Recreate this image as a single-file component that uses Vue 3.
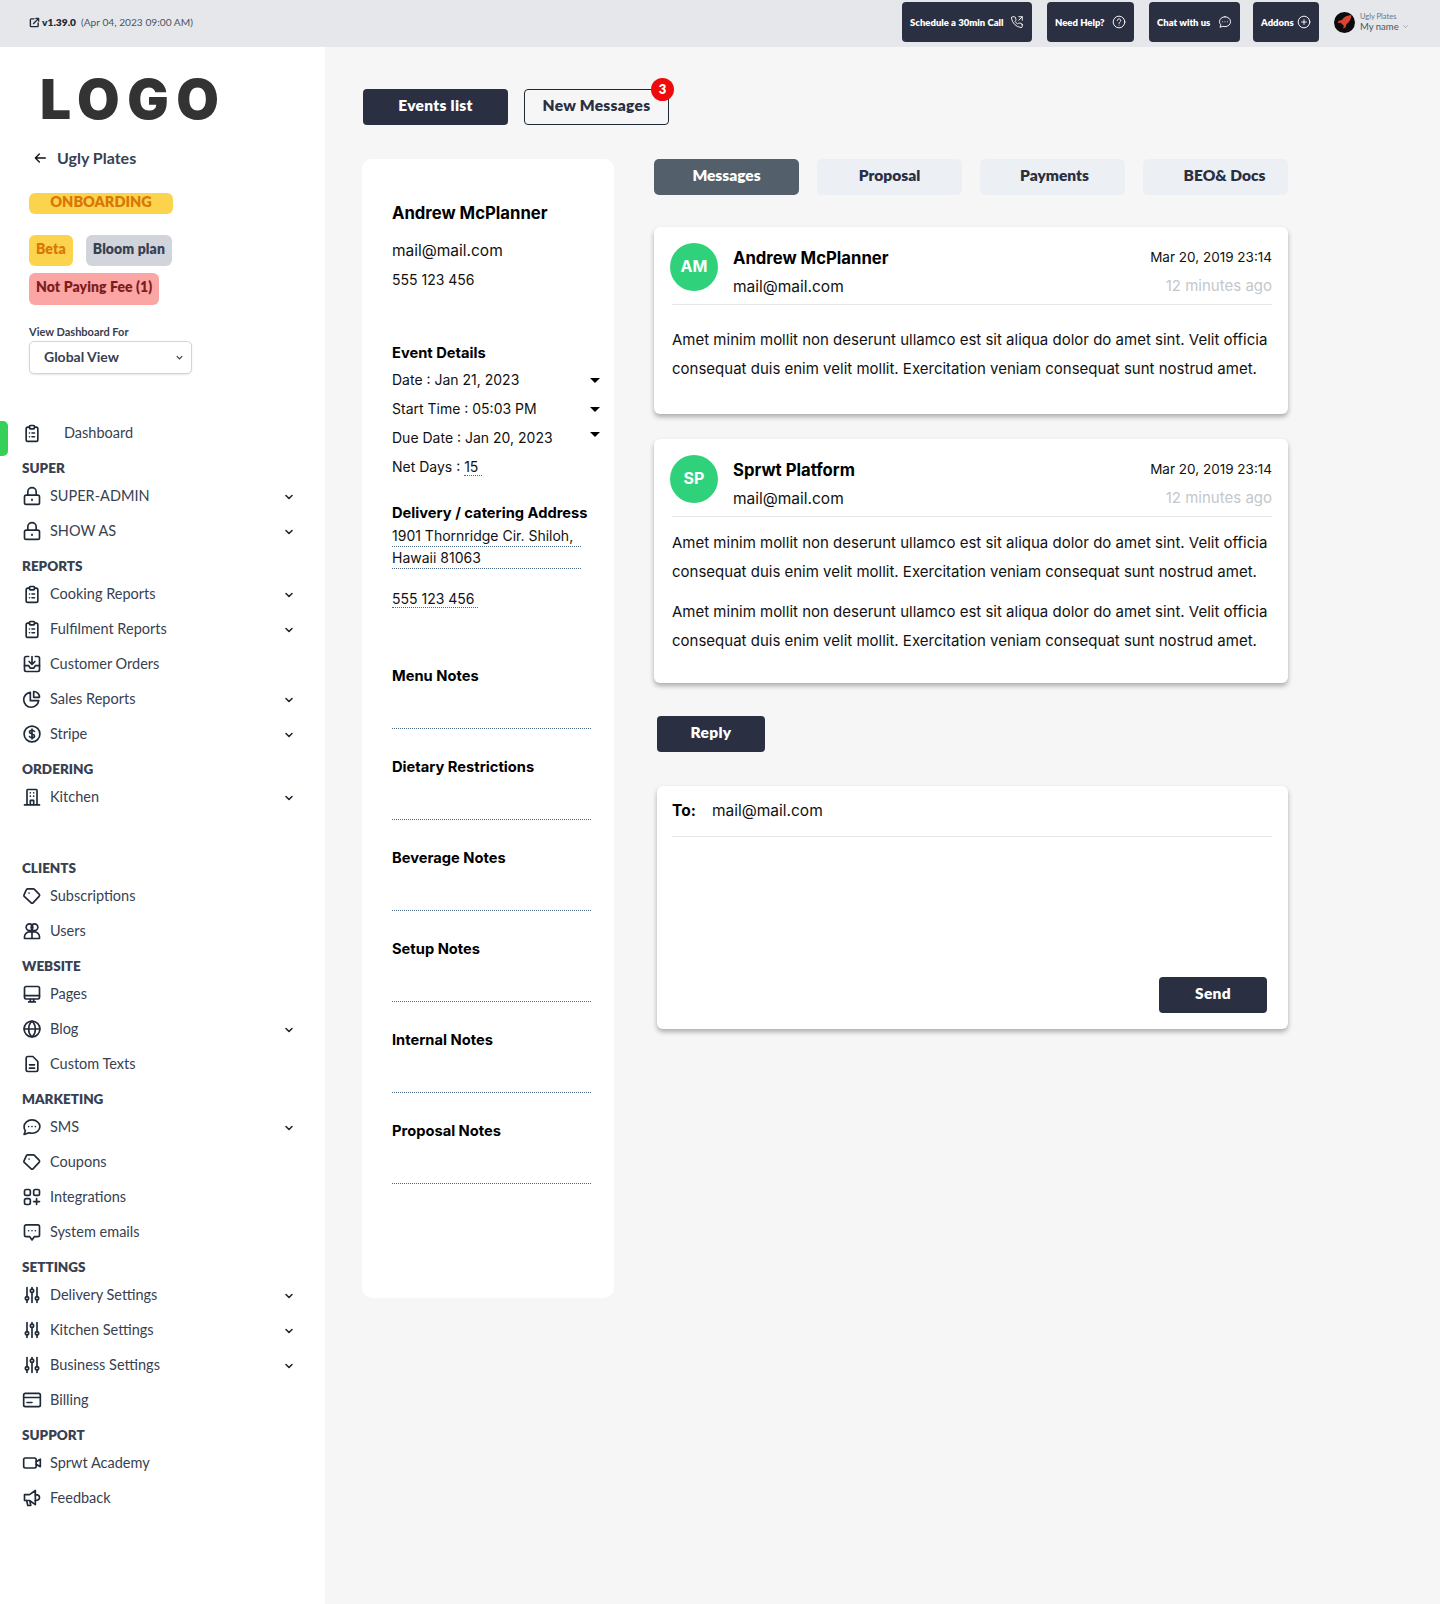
<template>
  <div class="page">
    <header class="topbar">
      <div class="version">
        <svg class="version-icon" viewBox="0 0 24 24" fill="none" stroke="currentColor" stroke-width="3" stroke-linecap="round" stroke-linejoin="round">
          <path d="M11 4H5a2 2 0 0 0-2 2v13a2 2 0 0 0 2 2h13a2 2 0 0 0 2-2v-6" />
          <path d="M10 14 21 3M15 3h6v6" />
        </svg>
        <b>v1.39.0</b>
        <span>(Apr 04, 2023 09:00 AM)</span>
      </div>
      <div class="top-actions">
        <button class="top-btn schedule">
          Schedule a 30min Call
          <svg viewBox="0 0 24 24" fill="none" stroke="currentColor" stroke-width="1.6" stroke-linecap="round" stroke-linejoin="round">
            <path d="M15 3h6v6M21 3l-6 6" />
            <path d="M21 16.500v3a2 2 0 0 1-2.200 2A19 19 0 0 1 2.500 5.200 2 2 0 0 1 4.500 3h3a2 2 0 0 1 2 1.700c.1 1 .4 1.900.7 2.800a2 2 0 0 1-.5 2.100L8.500 10.800a16 16 0 0 0 4.700 4.700l1.200-1.200a2 2 0 0 1 2.100-.5c.9.3 1.800.6 2.800.7a2 2 0 0 1 1.700 2z" />
          </svg>
        </button>
        <button class="top-btn help">
          Need Help?
          <svg viewBox="0 0 24 24" fill="none" stroke="currentColor" stroke-width="1.6" stroke-linecap="round" stroke-linejoin="round">
            <circle cx="12" cy="12" r="10" />
            <path d="M9 9.500a3 3 0 1 1 4.500 2.600c-1 .6-1.500 1.200-1.500 2.400M12 17.500h.01" />
          </svg>
        </button>
        <button class="top-btn chat">
          Chat with us
          <svg viewBox="0 0 24 24" fill="none" stroke="currentColor" stroke-width="1.6" stroke-linecap="round" stroke-linejoin="round">
            <path d="M12 3c5.300 0 9.500 3.800 9.500 8.500S17.300 20 12 20c-1.300 0-2.600-.2-3.700-.6L3.500 21l1.300-4.200A8 8 0 0 1 2.500 11.500C2.500 6.800 6.700 3 12 3z" />
            <path d="M8 11.500h.01M12 11.500h.01M16 11.500h.01" />
          </svg>
        </button>
        <button class="top-btn addons">
          Addons
          <svg viewBox="0 0 24 24" fill="none" stroke="currentColor" stroke-width="1.6" stroke-linecap="round">
            <circle cx="12" cy="12" r="10" />
            <path d="M12 8v8M8 12h8" />
          </svg>
        </button>
      </div>
      <div class="account">
        <svg class="account-logo" viewBox="0 0 24 24">
          <circle cx="12" cy="12" r="12" fill="#0b0b0b" />
          <path d="M20 3.500c-4.500.3-8.500 2-11 5.500l-3.500 1-1.500 2.500 3.500-.3 3.500 3.300-.3 3.500 2.500-1.500 1-3.500c3.500-2.500 5.500-6 5.800-10.500z" fill="#d9432f" />
        </svg>
        <div class="account-text">
          <span class="account-org">Ugly Plates</span>
          <span class="account-name">My name
            <svg viewBox="0 0 12 12" fill="none" stroke="#9ca3af" stroke-width="1.200"><path d="m3 4.500 3 3 3-3" /></svg>
          </span>
        </div>
      </div>
    </header>

    <div class="layout">
      <aside class="sidebar">
        <div class="logo">LOGO</div>
        <div class="back">
          <svg viewBox="0 0 24 24" fill="none" stroke="#111" stroke-width="2" stroke-linecap="round" stroke-linejoin="round">
            <path d="M20 12H5M11 6l-6 6 6 6" />
          </svg>
          Ugly Plates
        </div>
        <div class="onboarding">ONBOARDING</div>
        <div class="badges">
          <span class="badge beta">Beta</span>
          <span class="badge plan">Bloom plan</span>
          <span class="badge fee">Not Paying Fee (1)</span>
        </div>
        <div class="view-label">View Dashboard For</div>
        <div class="view-select">
          Global View
          <svg viewBox="0 0 12 12" fill="none" stroke="#374151" stroke-width="1.300"><path d="m3 4.500 3 3 3-3" /></svg>
        </div>

        <nav class="nav">
          <div class="nav-row dashboard">
            <i class="active-mark"></i>
            <svg class="nav-icon" viewBox="0 0 24 24" fill="none" stroke="#1f2937" stroke-linecap="round" stroke-linejoin="round">
              <path v-for="d in icons.clipboard" :key="d" :d="d" />
            </svg>
            <span>Dashboard</span>
          </div>
          <template v-for="group in groups" :key="group.title">
            <div class="nav-title" :class="{ spaced: group.spaced }">{{ group.title }}</div>
            <div v-for="item in group.items" :key="item.label" class="nav-row">
              <svg class="nav-icon" viewBox="0 0 24 24" fill="none" stroke="#1f2937" stroke-linecap="round" stroke-linejoin="round">
                <path v-for="d in icons[item.icon]" :key="d" :d="d" />
              </svg>
              <span>{{ item.label }}</span>
              <svg v-if="item.more" class="nav-more" viewBox="0 0 12 12" fill="none" stroke="#1f2937" stroke-width="1.600" stroke-linecap="round" stroke-linejoin="round">
                <path d="m3 4.500 3 3 3-3" />
              </svg>
            </div>
          </template>
        </nav>
      </aside>

      <main class="content">
        <div class="head-buttons">
          <button class="btn dark wide">Events list</button>
          <button class="btn outline wide">
            New Messages
            <span class="count">3</span>
          </button>
        </div>

        <div class="columns">
          <section class="details">
            <h2>Andrew McPlanner</h2>
            <div class="contact">
              <div class="contact-mail">mail@mail.com</div>
              <div>555 123 456</div>
            </div>

            <h3 class="event-title">Event Details</h3>
            <div class="event-row">Date : Jan 21, 2023 <i class="caret"></i></div>
            <div class="event-row">Start Time : 05:03 PM <i class="caret"></i></div>
            <div class="event-row">Due Date : Jan 20, 2023 <i class="caret raised"></i></div>
            <div class="event-row">Net Days : <span class="dotted">15&nbsp;</span></div>

            <h3 class="address-title">Delivery / catering Address</h3>
            <div class="address">
              <div>1901 Thornridge Cir. Shiloh,</div>
              <div>Hawaii 81063</div>
            </div>
            <div class="phone"><span class="dotted">555 123 456&nbsp;</span></div>

            <div class="notes">
              <div v-for="note in notes" :key="note" class="note">
                <h3>{{ note }}</h3>
                <div class="note-field"></div>
              </div>
            </div>
          </section>

          <section class="thread">
            <div class="tabs">
              <div v-for="(tab, i) in tabs" :key="tab" class="tab" :class="{ active: i === 0 }">{{ tab }}</div>
            </div>

            <article v-for="msg in messages" :key="msg.name" class="card message" :class="{ first: msg.first }">
              <div class="msg-head">
                <div class="avatar">{{ msg.initials }}</div>
                <div class="msg-who">
                  <div class="msg-name">{{ msg.name }}</div>
                  <div class="msg-mail">mail@mail.com</div>
                </div>
                <div class="msg-when">
                  <div class="msg-date">Mar 20, 2019 23:14</div>
                  <div class="msg-ago">12 minutes ago</div>
                </div>
              </div>
              <p v-for="n in msg.paragraphs" :key="n" class="msg-text">
                Amet minim mollit non deserunt ullamco est sit aliqua dolor do amet sint. Velit officia<br />
                consequat duis enim velit mollit. Exercitation veniam consequat sunt nostrud amet.
              </p>
            </article>

            <button class="btn dark reply">Reply</button>

            <div class="card composer">
              <div class="to-row"><b>To:</b><span>mail@mail.com</span></div>
              <div class="composer-actions">
                <button class="btn dark">Send</button>
              </div>
            </div>
          </section>
        </div>
      </main>
    </div>
  </div>
</template>

<script setup>
const icons = {
  clipboard: [
    "M9 5H7a2 2 0 0 0-2 2v13a2 2 0 0 0 2 2h10a2 2 0 0 0 2-2V7a2 2 0 0 0-2-2h-2",
    "M10 3h4a1 1 0 0 1 1 1v2a1 1 0 0 1-1 1h-4a1 1 0 0 1-1-1V4a1 1 0 0 1 1-1z",
    "M9 12h.01M12 12h3M9 16.500h.01M12 16.500h3",
  ],
  lock: [
    "M5 11h14a2 2 0 0 1 2 2v7a2 2 0 0 1-2 2H5a2 2 0 0 1-2-2v-7a2 2 0 0 1 2-2z",
    "M7 11V7a5 5 0 0 1 10 0v4",
    "M12 16v1",
  ],
  inbox: [
    "M8 3H5a2 2 0 0 0-2 2v14a2 2 0 0 0 2 2h14a2 2 0 0 0 2-2V5a2 2 0 0 0-2-2h-3",
    "M12 3v9M8.500 9l3.500 3.500L15.500 9",
    "M3 14h5l2 3h4l2-3h5",
  ],
  pie: [
    "M10 4a9 9 0 1 0 10 10H10V4z",
    "M14 3a7 7 0 0 1 7 7h-7V3z",
  ],
  dollar: [
    "M12 2.500a9.500 9.500 0 1 1 0 19 9.500 9.500 0 0 1 0-19z",
    "M15 9c-.5-1-1.500-1.500-3-1.500-2 0-3 1-3 2.200 0 3 6 1.600 6 4.600 0 1.200-1 2.200-3 2.200-1.500 0-2.500-.5-3-1.500M12 6v12",
  ],
  building: [
    "M6 21V4a1 1 0 0 1 1-1h10a1 1 0 0 1 1 1v17",
    "M3 21.500h18",
    "M10 7h.01M14 7h.01M10 11h.01M14 11h.01",
    "M10 21v-5h4v5",
  ],
  tag: [
    "M7 3.500h6.500a2 2 0 0 1 1.400.6l5.600 5.600a2 2 0 0 1 0 2.800l-7 7.500a2 2 0 0 1-2.800 0l-8-7.500a1.500 1.500 0 0 1-.4-1.500L5 5a2 2 0 0 1 2-1.500z",
    "M8.500 8.500h.01",
  ],
  users: [
    "M9 3.500a4 4 0 1 1 0 8 4 4 0 0 1 0-8z",
    "M15 3.500a4 4 0 1 1 0 8 4 4 0 0 1 0-8z",
    "M3 21v-2a6 6 0 0 1 6-6h6a6 6 0 0 1 6 6v2z",
    "M12 13v8",
  ],
  monitor: [
    "M5 3h14a2 2 0 0 1 2 2v11a2 2 0 0 1-2 2H5a2 2 0 0 1-2-2V5a2 2 0 0 1 2-2z",
    "M3 14h18M8 21.500h8M10 18v3.500M14 18v3.500",
  ],
  globe: [
    "M12 2.500a9.500 9.500 0 1 1 0 19 9.500 9.500 0 0 1 0-19z",
    "M2.500 12h19",
    "M12 2.500c3 2.600 4 6 4 9.500s-1 6.900-4 9.500c-3-2.600-4-6-4-9.500s1-6.900 4-9.500z",
  ],
  doc: [
    "M13 3H7a2 2 0 0 0-2 2v14a2 2 0 0 0 2 2h10a2 2 0 0 0 2-2V9l-6-6z",
    "M9 13h6M9 17h6",
  ],
  sms: [
    "M12 3.500c5 0 9.500 3.500 9.500 8s-4.500 8-9.500 8c-1.300 0-2.600-.2-3.700-.6L2.500 21l1.500-4.400A7.500 7.500 0 0 1 2.500 11.500c0-4.500 4.500-8 9.500-8z",
    "M8 11.500h.01M12 11.500h.01M16 11.500h.01",
  ],
  integrations: [
    "M5 3h3a2 2 0 0 1 2 2v3a2 2 0 0 1-2 2H5a2 2 0 0 1-2-2V5a2 2 0 0 1 2-2z",
    "M16 3h3a2 2 0 0 1 2 2v3a2 2 0 0 1-2 2h-3a2 2 0 0 1-2-2V5a2 2 0 0 1 2-2z",
    "M5 14h3a2 2 0 0 1 2 2v3a2 2 0 0 1-2 2H5a2 2 0 0 1-2-2v-3a2 2 0 0 1 2-2z",
    "M17.500 14v7M14 17.500h7",
  ],
  emails: [
    "M5 3.500h14a2 2 0 0 1 2 2v10a2 2 0 0 1-2 2h-4l-3 4-3-4H5a2 2 0 0 1-2-2v-10a2 2 0 0 1 2-2z",
    "M8 10.500h.01M12 10.500h.01M16 10.500h.01",
  ],
  sliders: [
    "M6 3v11M6 18v3M12 3v2M12 9v12M18 3v11M18 18v3",
    "M6 14a2 2 0 1 1 0 4 2 2 0 0 1 0-4z",
    "M12 5a2 2 0 1 1 0 4 2 2 0 0 1 0-4z",
    "M18 14a2 2 0 1 1 0 4 2 2 0 0 1 0-4z",
  ],
  card: [
    "M4 4h16a2 2 0 0 1 2 2v12a2 2 0 0 1-2 2H4a2 2 0 0 1-2-2V6a2 2 0 0 1 2-2z",
    "M2 9h20M6 15h6",
  ],
  video: [
    "M4 6h11a2 2 0 0 1 2 2v8a2 2 0 0 1-2 2H4a2 2 0 0 1-2-2V8a2 2 0 0 1 2-2z",
    "m17 10.500 5-3v9l-5-3",
  ],
  megaphone: [
    "M3 8h6l7-5v17l-7-5H3z",
    "M16 8c3 0 5 1.500 5 3.500S19 15 16 15",
    "M5.500 15l1.500 6h3.500l-1-5.500",
  ],
};

const groups = [
  {
    title: "SUPER",
    items: [
      { label: "SUPER-ADMIN", icon: "lock", more: true },
      { label: "SHOW AS", icon: "lock", more: true },
    ],
  },
  {
    title: "REPORTS",
    items: [
      { label: "Cooking Reports", icon: "clipboard", more: true },
      { label: "Fulfilment Reports", icon: "clipboard", more: true },
      { label: "Customer Orders", icon: "inbox" },
      { label: "Sales Reports", icon: "pie", more: true },
      { label: "Stripe", icon: "dollar", more: true },
    ],
  },
  {
    title: "ORDERING",
    items: [{ label: "Kitchen", icon: "building", more: true }],
  },
  {
    title: "CLIENTS",
    spaced: true,
    items: [
      { label: "Subscriptions", icon: "tag" },
      { label: "Users", icon: "users" },
    ],
  },
  {
    title: "WEBSITE",
    items: [
      { label: "Pages", icon: "monitor" },
      { label: "Blog", icon: "globe", more: true },
      { label: "Custom Texts", icon: "doc" },
    ],
  },
  {
    title: "MARKETING",
    items: [
      { label: "SMS", icon: "sms", more: true },
      { label: "Coupons", icon: "tag" },
      { label: "Integrations", icon: "integrations" },
      { label: "System emails", icon: "emails" },
    ],
  },
  {
    title: "SETTINGS",
    items: [
      { label: "Delivery Settings", icon: "sliders", more: true },
      { label: "Kitchen Settings", icon: "sliders", more: true },
      { label: "Business Settings", icon: "sliders", more: true },
      { label: "Billing", icon: "card" },
    ],
  },
  {
    title: "SUPPORT",
    items: [
      { label: "Sprwt Academy", icon: "video" },
      { label: "Feedback", icon: "megaphone" },
    ],
  },
];

const notes = [
  "Menu Notes",
  "Dietary Restrictions",
  "Beverage Notes",
  "Setup Notes",
  "Internal Notes",
  "Proposal Notes",
];

const tabs = ["Messages", "Proposal", "Payments", "BEO& Docs"];

const messages = [
  { name: "Andrew McPlanner", initials: "AM", paragraphs: 1, first: true },
  { name: "Sprwt Platform", initials: "SP", paragraphs: 2 },
];
</script>

<style>
body {
  margin: 0;
  background: #f6f6f6;
}
</style>

<style scoped>
.page {
  min-height: 1604px;
  background: #f6f6f6;
  font-family: Inter, "Liberation Sans", sans-serif;
  color: #111;
}

button {
  font-family: inherit;
  cursor: pointer;
}

.topbar {
  height: 47px;
  background: #e5e7eb;
  display: flex;
  align-items: center;
  padding: 0 0 3px 29px;
  box-sizing: border-box;
}

.version {
  display: flex;
  align-items: center;
  font-family: Lato, sans-serif;
  font-size: 10.200px;
  color: #4b5563;
}

.version b {
  color: #1f2937;
  margin-right: 5px;
  font-weight: 800;
}

.version-icon {
  width: 11px;
  height: 11px;
  color: #1f2937;
  margin-right: 2px;
}

.top-actions {
  display: flex;
  gap: 15px;
  margin-left: auto;
}

.top-btn {
  height: 40px;
  border: 0;
  border-radius: 4px;
  background: #2a2f42;
  color: #fff;
  font-family: Lato, sans-serif;
  font-size: 9.500px;
  font-weight: 800;
  display: flex;
  align-items: center;
  justify-content: space-between;
  padding: 0 8px;
  box-sizing: border-box;
}

.top-btn svg {
  width: 14px;
  height: 14px;
}

.schedule { width: 130px; }
.help { width: 87px; }
.chat { width: 91px; }
.addons {
  width: 66px;
  margin-left: -2px;
}

.account {
  width: 106px;
  margin-left: 15px;
  display: flex;
  align-items: center;
  gap: 5px;
  font-family: Lato, sans-serif;
}

.account-logo {
  width: 21px;
  height: 21px;
}

.account-text {
  display: flex;
  flex-direction: column;
}

.account-org {
  font-size: 7.500px;
  color: #6b7280;
}

.account-name {
  font-size: 9.500px;
  color: #4b5563;
  display: flex;
  align-items: center;
  gap: 2px;
}

.account-name svg {
  width: 9px;
  height: 9px;
}

.layout {
  display: flex;
  align-items: stretch;
}

.sidebar {
  width: 325px;
  flex: none;
  min-height: 1557px;
  background: #fff;
  box-sizing: border-box;
  padding: 22px 0 0 22px;
  font-family: Lato, sans-serif;
}

.logo {
  font-family: Inter, sans-serif;
  font-weight: 900;
  font-size: 55px;
  line-height: 60px;
  letter-spacing: 7.500px;
  color: #333;
  margin-left: 18px;
}

.back {
  display: flex;
  align-items: center;
  gap: 9px;
  margin: 17px 0 0 10px;
  height: 24px;
  padding-bottom: 2px;
  box-sizing: border-box;
  font-size: 16px;
  font-weight: 700;
  color: #374151;
}

.back svg {
  width: 16px;
  height: 16px;
  margin-top: 2px;
}

.onboarding {
  width: 144px;
  height: 21px;
  margin: 23px 0 0 7px;
  border-radius: 6px;
  background: #fcd34d;
  color: #d97706;
  font-size: 14.500px;
  font-weight: 800;
  line-height: 18px;
  text-align: center;
}

.badges {
  display: flex;
  flex-wrap: wrap;
  gap: 7px 13px;
  width: 170px;
  margin: 21px 0 0 7px;
}

.badge {
  height: 31px;
  border-radius: 6px;
  padding: 0 7px;
  box-sizing: border-box;
  font-size: 14px;
  font-weight: 800;
  line-height: 28px;
  letter-spacing: 0.1px;
}

.beta {
  background: #fcd34d;
  color: #d97706;
}

.plan {
  background: #d1d5db;
  color: #374151;
}

.fee {
  background: #fca5a5;
  color: #7f1d1d;
  height: 32px;
}

.view-label {
  margin: 19px 0 0 7px;
  font-size: 11px;
  line-height: 16px;
  font-weight: 700;
  color: #374151;
}

.view-select {
  width: 163px;
  height: 33px;
  margin: 1px 0 0 7px;
  padding: 0 6px 3px 14px;
  box-sizing: border-box;
  background: #fff;
  border: 1px solid #d1d5db;
  border-radius: 5px;
  box-shadow: 0 1px 2px rgba(0, 0, 0, 0.1);
  display: flex;
  align-items: center;
  justify-content: space-between;
  font-size: 14px;
  font-weight: 700;
  color: #374151;
}

.view-select svg {
  width: 11px;
  height: 11px;
  margin-top: 3px;
}

.nav {
  margin-top: 41px;
  width: 273px;
}

.nav-row {
  position: relative;
  height: 35px;
  display: flex;
  align-items: center;
  font-size: 14.500px;
  color: #374151;
}

.nav-row.dashboard span {
  margin-left: 14px;
}

.active-mark {
  position: absolute;
  left: -22px;
  top: 6px;
  width: 8px;
  height: 35px;
  background: #34d058;
  border-radius: 0 5px 5px 0;
}

.nav-icon {
  width: 20px;
  height: 20px;
  margin-right: 8px;
  stroke-width: 2;
}

.nav-more {
  width: 12px;
  height: 12px;
  margin: 3px 0 0 auto;
}

.nav-title {
  margin-top: 8px;
  height: 20px;
  line-height: 20px;
  font-size: 13.500px;
  font-weight: 800;
  color: #374151;
}

.nav-title.spaced {
  margin-top: 44px;
}

.content {
  flex: 1;
  padding: 42px 0 0 37px;
  min-width: 0;
}

.head-buttons {
  display: flex;
  gap: 16px;
  margin-left: 1px;
}

.btn {
  height: 36px;
  width: 108px;
  border: 0;
  border-radius: 4px;
  padding: 0 0 4px;
  font-size: 15.500px;
  font-weight: 800;
  font-family: Lato, sans-serif;
  letter-spacing: 0.3px;
}

.btn.wide {
  width: 145px;
}

.dark {
  background: #2a2f42;
  color: #fff;
}

.outline {
  position: relative;
  background: #f6f6f6;
  color: #2a2f42;
  border: 1px solid #1f2937;
}

.count {
  position: absolute;
  right: -6px;
  top: -12px;
  width: 23px;
  height: 23px;
  border-radius: 50%;
  background: #ef0b0b;
  color: #fff;
  font-size: 13px;
  line-height: 23px;
  text-align: center;
  letter-spacing: 0;
}

.columns {
  display: flex;
  align-items: flex-start;
  gap: 40px;
  margin-top: 34px;
}

.details {
  width: 252px;
  box-sizing: border-box;
  padding: 42px 0 114px 30px;
  background: #fff;
  border-radius: 10px;
  font-size: 14px;
}

.details h2 {
  margin: 0;
  font-size: 16.700px;
  line-height: 24px;
  font-weight: 700;
  color: #000;
}

.details h3 {
  margin: 0;
  font-size: 14.700px;
  line-height: 22px;
  font-weight: 700;
  color: #000;
}

.contact {
  margin-top: 11px;
  line-height: 29px;
}

.contact-mail {
  font-size: 15.500px;
}

.details .event-title {
  margin-top: 47px;
  line-height: 24px;
}

.event-row {
  position: relative;
  width: 208px;
  line-height: 29px;
}

.caret {
  position: absolute;
  right: 0;
  top: 13px;
  border-left: 5px solid transparent;
  border-right: 5px solid transparent;
  border-top: 5px solid #000;
}

.caret.raised {
  top: 9px;
}

.dotted {
  border-bottom: 1px dotted #4b6a8a;
}

.details .address-title {
  margin-top: 21px;
}

.address {
  margin-top: 1px;
  width: 189px;
  line-height: 21px;
}

.address div {
  border-bottom: 1px dotted #4b6a8a;
  height: 21px;
  white-space: nowrap;
}

.phone {
  margin-top: 18px;
  line-height: 24px;
}

.notes {
  margin-top: 54px;
}

.note + .note {
  margin-top: 27px;
}

.note-field {
  width: 199px;
  height: 42px;
  border-bottom: 1px dotted #4b6a8a;
  box-sizing: border-box;
}

.thread {
  width: 634px;
}

.tabs {
  display: flex;
  gap: 18px;
  margin-bottom: 32px;
}

.tab {
  width: 145px;
  height: 36px;
  border-radius: 5px;
  background: #eceff4;
  color: #2a2f42;
  font-family: Lato, sans-serif;
  font-size: 15.500px;
  font-weight: 800;
  line-height: 33px;
  text-align: center;
  box-sizing: border-box;
}

.tab:nth-child(3) {
  padding-left: 4px;
}

.tab:nth-child(4) {
  padding-left: 18px;
}

.tab.active {
  background: #535f6b;
  color: #fff;
}

.card {
  background: #fff;
  border-radius: 6px;
  box-shadow: 0 3px 5px rgba(0, 0, 0, 0.3);
}

.message {
  padding: 16px 16px 28px 18px;
  margin-bottom: 25px;
}

.message.first {
  padding-bottom: 31px;
}

.msg-head {
  display: flex;
  height: 62px;
  box-sizing: border-box;
  border-bottom: 1px solid #e5e7eb;
}

.avatar {
  width: 48px;
  height: 48px;
  margin-left: -2px;
  border-radius: 50%;
  background: #2fd27a;
  color: #fff;
  font-size: 16px;
  font-weight: 700;
  line-height: 46px;
  text-align: center;
}

.msg-who {
  margin: 1px 0 0 15px;
}

.msg-name {
  height: 28px;
  line-height: 28px;
  font-size: 16.700px;
  font-weight: 700;
  color: #000;
}

.msg-mail,
.msg-ago {
  height: 29px;
  line-height: 29px;
}

.msg-mail {
  font-size: 15.500px;
}

.msg-when {
  margin-left: auto;
  text-align: right;
  font-size: 13.500px;
}

.msg-date {
  height: 28px;
  line-height: 28px;
}

.msg-ago {
  color: #c4c7cc;
  font-size: 15px;
}

.msg-text {
  margin: 11px 0 0;
  font-size: 15px;
  line-height: 29px;
  white-space: nowrap;
}

.first .msg-text {
  margin-top: 20px;
}

.reply {
  display: block;
  margin: 33px 0 0 3px;
}

.composer {
  margin: 34px 0 0 3px;
  height: 243px;
  padding: 0 16px 16px 15px;
  box-sizing: border-box;
  display: flex;
  flex-direction: column;
}

.to-row {
  height: 51px;
  display: flex;
  align-items: center;
  padding-bottom: 1px;
  box-sizing: border-box;
  border-bottom: 1px solid #e5e7eb;
  font-size: 15.500px;
}

.to-row b {
  width: 40px;
  color: #000;
}

.composer-actions {
  margin-top: auto;
  display: flex;
  justify-content: flex-end;
  padding-right: 5px;
}
</style>
